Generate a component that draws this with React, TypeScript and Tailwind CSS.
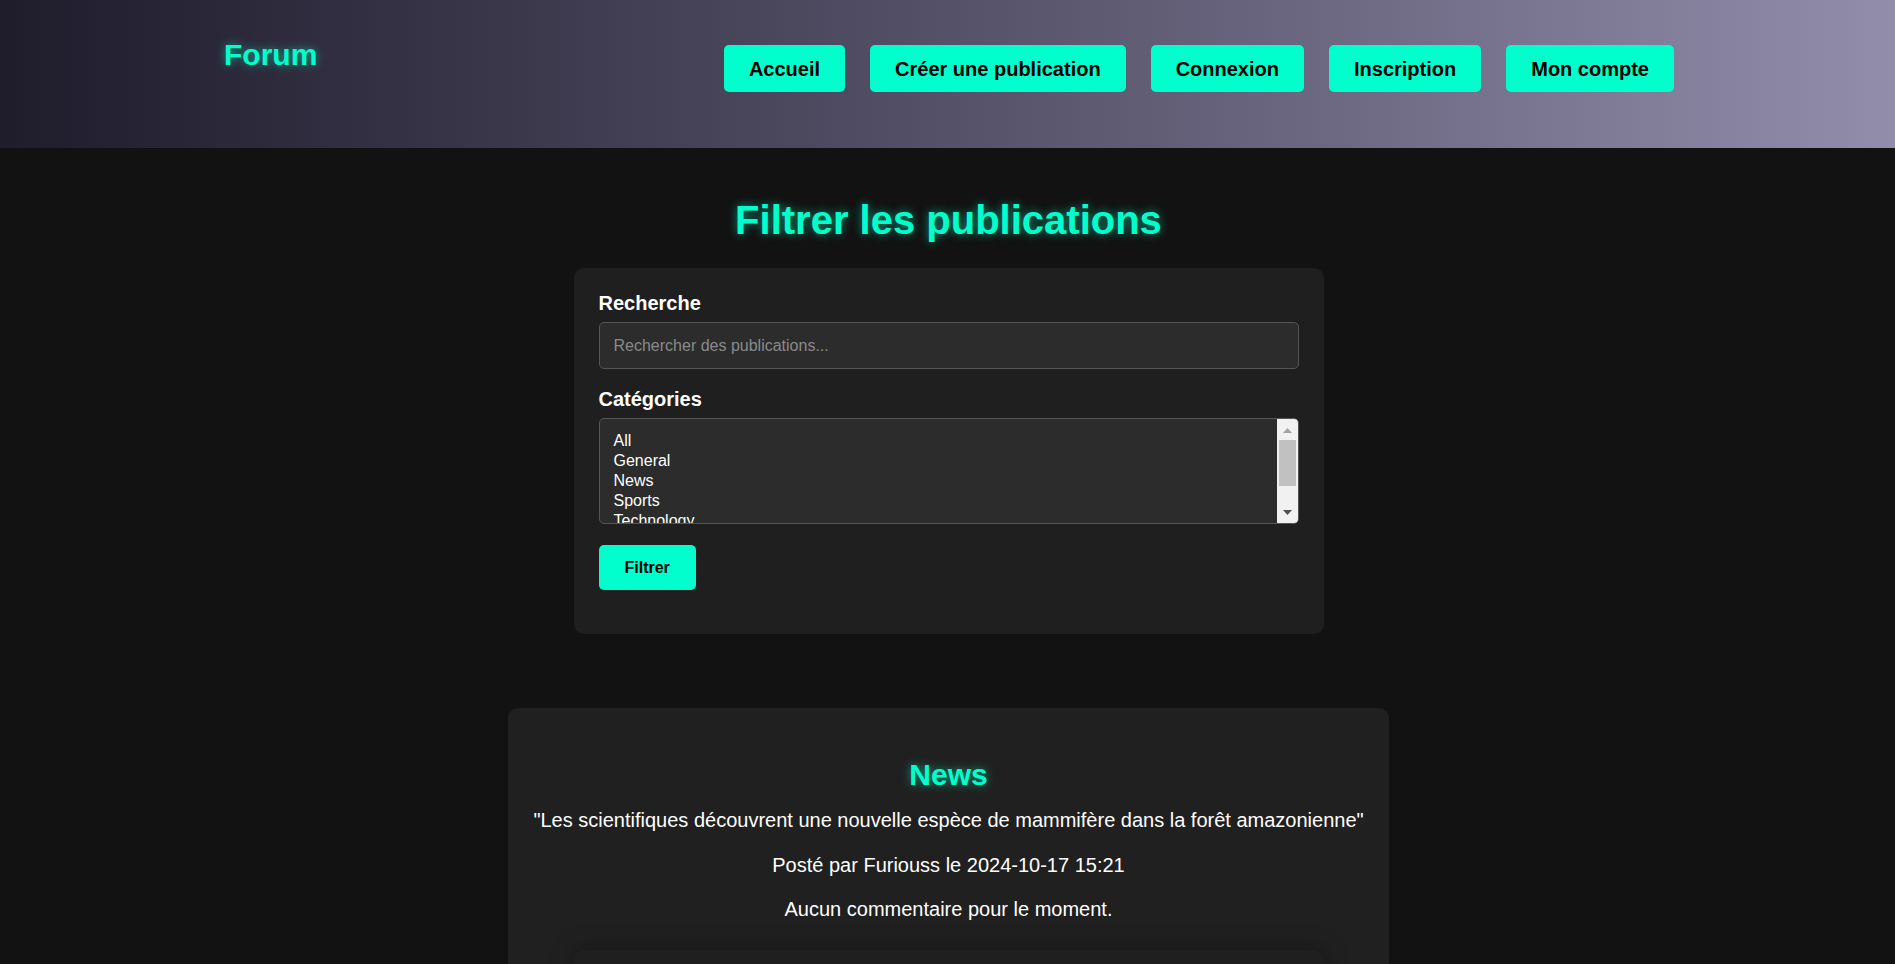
import { useState } from "react"

const navLinks = ["Accueil", "Créer une publication", "Connexion", "Inscription", "Mon compte"]

const categories = ["All", "General", "News", "Sports", "Technology", "Entertainment"]

// glow used on the teal headings
const glow = "[text-shadow:0_0_10px_rgba(0,255,204,0.55)]"

function FakeScrollbar() {
  return (
    <div className="w-[21px] shrink-0 bg-[#f1f1f1] flex flex-col items-center">
      <svg width="9" height="5" viewBox="0 0 9 5" className="mt-[9px]">
        <polygon points="4.5,0 9,5 0,5" fill="#a3a3a3" />
      </svg>
      <div className="w-[17px] h-[46px] bg-[#c1c1c1] mt-[7px]" />
      <svg width="9" height="5" viewBox="0 0 9 5" className="mt-[24px]">
        <polygon points="0,0 9,0 4.5,5" fill="#505050" />
      </svg>
    </div>
  )
}

export default function App() {
  const [search, setSearch] = useState("")

  return (
    <div className="min-h-screen bg-[#121212] text-white font-['Liberation_Sans',Arial,sans-serif]">
      {/* Header */}
      <header className="h-[148px] bg-linear-to-r from-[#1f1c2c] to-[#928dab] flex justify-between items-start pl-[224px] pr-[221px] pt-[38px]">
        <h1 className={`text-[30px] leading-[34px] font-bold text-[#00ffcc] ${glow}`}>Forum</h1>
        <nav className="flex gap-[25px] pt-[7px]">
          {navLinks.map((link) => (
            <a
              key={link}
              href="#"
              className="h-[47px] px-[25px] flex items-center bg-[#00ffcc] text-black text-[20px] font-bold rounded-[5px]"
            >
              {link}
            </a>
          ))}
        </nav>
      </header>

      <main className="flex flex-col items-center">
        <h2 className={`mt-[49px] ml-[2px] text-[40px] leading-[46px] font-bold text-[#00ffcc] ${glow}`}>
          Filtrer les publications
        </h2>

        {/* Filter form */}
        <form className="mt-[25px] ml-[2px] w-[750px] bg-[#1f1f1f] rounded-[10px] pt-[24px] px-[25px] pb-[44px]">
          <label className="block text-[20px] leading-[23px] font-bold">Recherche</label>
          <input
            type="text"
            value={search}
            onChange={(e) => setSearch(e.target.value)}
            placeholder="Rechercher des publications..."
            className="mt-[7px] block w-full h-[47px] px-[14px] bg-[#2c2c2c] border border-[#555] rounded-[5px] text-[16px] text-white placeholder:text-[#8a8a8a] outline-none"
          />

          <label className="block mt-[19px] text-[20px] leading-[23px] font-bold">Catégories</label>
          <div className="mt-[7px] h-[106px] flex bg-[#2c2c2c] border border-[#555] rounded-[5px] overflow-hidden">
            <ul className="flex-1 pl-[14px] pt-[12px] text-[16px] leading-[20px]">
              {categories.map((c) => (
                <li key={c}>{c}</li>
              ))}
            </ul>
            <FakeScrollbar />
          </div>

          <button
            type="button"
            className="mt-[21px] h-[45px] px-[26px] bg-[#00ffcc] text-black text-[16px] font-bold rounded-[5px]"
          >
            Filtrer
          </button>
        </form>

        {/* Post */}
        <section className="mt-[74px] ml-[2px] w-[881px] bg-[#202020] rounded-[10px] pt-[25px] px-[25px] pb-[25px] text-center">
          <h3 className={`mt-[25px] text-[30px] leading-[34px] font-bold text-[#00ffcc] ${glow}`}>News</h3>
          <p className="mt-[15px] text-[20px] leading-[27px]">
            "Les scientifiques découvrent une nouvelle espèce de mammifère dans la forêt amazonienne"
          </p>
          <p className="mt-[18px] text-[20px] leading-[27px]">Posté par Furiouss le 2024-10-17 15:21</p>
          <p className="mt-[17px] text-[20px] leading-[27px]">Aucun commentaire pour le moment.</p>

          <div className="mt-[27px] mx-auto w-[750px] h-[200px] bg-[#1f1f1f] rounded-[10px] shadow-[0_0_25px_rgba(0,0,0,0.35)]" />
        </section>
      </main>
    </div>
  )
}
